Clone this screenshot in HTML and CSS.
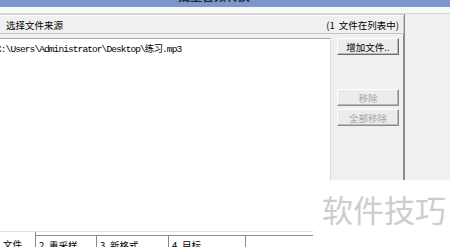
FILE: index.html
```html
<!DOCTYPE html>
<html lang="zh-CN">
<head>
    <meta charset="UTF-8">
    <title>批量音频转换</title>
    <link rel="stylesheet" href="styles.css">
</head>
<body>
    <div class="titlebar"><span class="title">批量音频转换</span></div>
    <div class="strip"></div>

    <div class="main">
        <div class="panel">
            <div class="header">
                <span>选择文件来源</span>
                <span>(1 文件在列表中)</span>
            </div>
            <div class="body">
                <div class="list">
                    <div class="item">C:\Users\Administrator\Desktop\练习.mp3</div>
                </div>
                <div class="buttons">
                    <button class="btn">增加文件..</button>
                    <button class="btn off first-off" disabled>移除</button>
                    <button class="btn off" disabled>全部移除</button>
                </div>
            </div>
        </div>
        <div class="side"></div>
    </div>

    <div class="bottom">
        <div class="mark">软件技巧</div>
        <div class="tabs">
            <div class="tab current">文件</div>
            <div class="tab t2">2.&nbsp;重采样</div>
            <div class="tab t3">3.&nbsp;新格式</div>
            <div class="tab t4">4.&nbsp;目标</div>
            <div class="tab rest"></div>
        </div>
    </div>
</body>
</html>
```

FILE: styles.css
```css
body {
  margin: 0;
  width: 450px;
  height: 247px;
  overflow: hidden;
  font-family: "Noto Sans CJK SC", "Liberation Sans", sans-serif;
  font-size: 9.5px;
  color: #000;
  background: #fff;
}

.titlebar {
  height: 7px;
  background: #7c97c9;
  overflow: hidden;
}
.title {
  display: block;
  padding-left: 178px;
  margin-top: -11px;
  font-size: 12px;
  line-height: 14px;
  color: #1d2a44;
  font-weight: bold;
}

.strip {
  height: 6px;
  background: #f8f8f8;
  border-bottom: 1px solid #d6d6d6;
}

.main {
  display: flex;
  height: 166px;
  background: #f0f0f0;
}
.panel {
  width: 403px;
  border-right: 2px solid #8a8a8a;
  padding-top: 1px;
}
.side {
  flex: 1;
  background: #f0f0f0;
}

.header {
  width: 393px;
  height: 17px;
  padding: 0 4px 0 6px;
  display: flex;
  justify-content: space-between;
  align-items: center;
  border-top: 1px solid #fff;
  border-bottom: 1px solid #c4c4c4;
  border-right: 1px solid #c4c4c4;
  box-shadow: 0 -1px 0 #d0d0d0;
}
.header span + span {
  word-spacing: 2px;
}

.body {
  display: flex;
  margin-top: 4px;
  height: 143px;
}
.list {
  width: 330px;
  background: #fff;
  border-top: 1px solid #a8a8a8;
  border-right: 1px solid #dcdcdc;
  overflow: hidden;
}
.item {
  margin-left: -4px;
  margin-top: 2px;
  font-family: "Liberation Mono", "Noto Sans CJK SC", monospace;
  font-size: 9.5px;
  letter-spacing: -0.9px;
  white-space: nowrap;
}

.buttons {
  display: flex;
  flex-direction: column;
  margin-left: 6px;
  width: 62px;
}
.btn {
  height: 17px;
  padding: 0;
  font-family: "Noto Sans CJK SC", sans-serif;
  font-size: 9.5px;
  line-height: 14px;
  color: #000;
  background: #ececec;
  border: 1px solid;
  border-color: #fff #6f6f6f #6f6f6f #fff;
  box-shadow: inset -1px -1px 0 #b8b8b8;
  margin-bottom: 3px;
}
.btn.off {
  color: #a6a6a6;
  border-color: #fff #8c8c8c #8c8c8c #fff;
}
.first-off {
  margin-top: 31px;
}

.bottom {
  height: 67px;
  background: #fff;
  display: flex;
  flex-direction: column;
}
.mark {
  align-self: flex-end;
  margin: 9px 4px 0 0;
  font-size: 31px;
  line-height: 40px;
  color: #cdcdcd;
}

.tabs {
  display: flex;
  width: 313px;
  margin-top: 2px;
  padding-top: 3px;
  border-top: 1px solid #e2e2e2;
  height: 14px;
}
.tab {
  border-top: 1px solid #8a8a8a;
  border-right: 1px solid #8a8a8a;
  padding: 3px 0 0 3px;
  line-height: 13px;
  white-space: nowrap;
}
.tab.current {
  width: 32px;
  border-top: none;
  padding-top: 6px;
  margin-top: -3px;
}
.t2 { width: 57px; }
.t3 { width: 68px; }
.t4 { width: 73px; }
.tab.rest {
  flex: 1;
  border-right: none;
}
```
